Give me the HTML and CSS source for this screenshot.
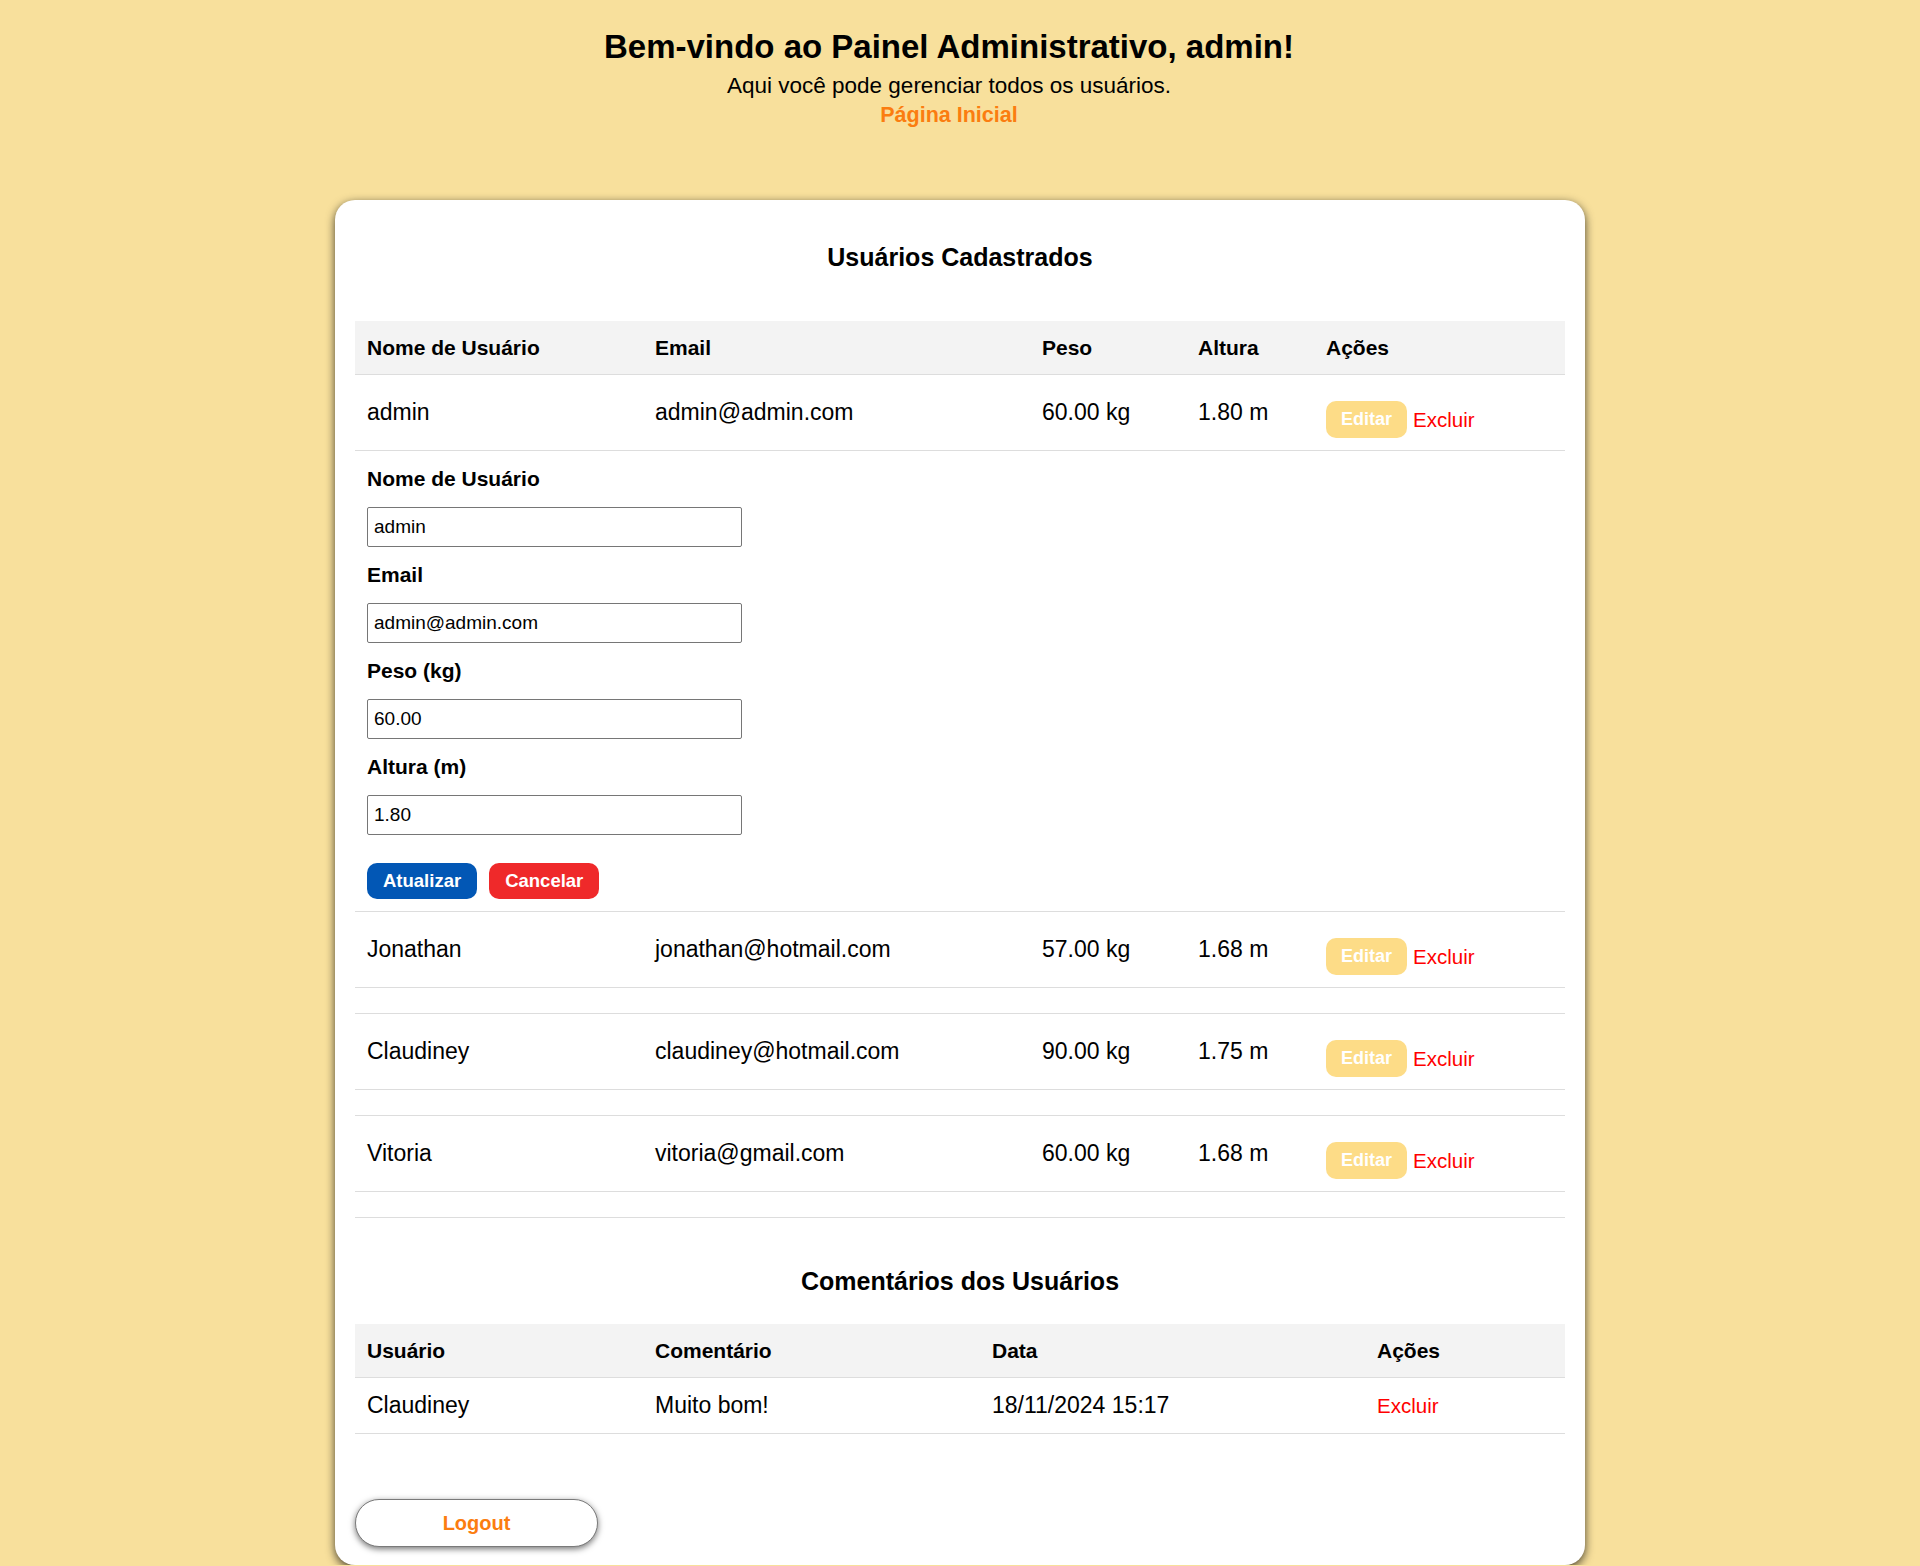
FILE: index.html
```html
<!DOCTYPE html>
<html lang="pt-BR">
<head>
<meta charset="UTF-8">
<title>Painel Administrativo</title>
<link rel="stylesheet" href="styles.css">
</head>
<body>
<header class="top">
  <h1 class="welcome">Bem-vindo ao Painel Administrativo, admin!</h1>
  <p class="intro">Aqui você pode gerenciar todos os usuários.</p>
  <a class="home-link" href="#">Página Inicial</a>
</header>
<main class="card">
  <h2 class="section-title users-title">Usuários Cadastrados</h2>
  <table class="data-table">
    <colgroup>
      <col class="c-name"><col class="c-email"><col class="c-peso"><col class="c-altura"><col class="c-acoes">
    </colgroup>
    <thead>
      <tr><th>Nome de Usuário</th><th>Email</th><th>Peso</th><th>Altura</th><th>Ações</th></tr>
    </thead>
    <tbody>
      <tr>
        <td>admin</td><td>admin@admin.com</td><td>60.00 kg</td><td>1.80 m</td>
        <td class="actions"><div class="actions-inner"><button class="btn-edit" type="button">Editar</button><a class="link-delete" href="#">Excluir</a></div></td>
      </tr>
      <tr class="edit-row">
        <td colspan="5">
          <form class="edit-form">
            <label class="field-label">Nome de Usuário</label>
            <input class="field-input" type="text" value="admin">
            <label class="field-label">Email</label>
            <input class="field-input" type="text" value="admin@admin.com">
            <label class="field-label">Peso (kg)</label>
            <input class="field-input" type="text" value="60.00">
            <label class="field-label">Altura (m)</label>
            <input class="field-input" type="text" value="1.80">
            <div class="form-buttons">
              <button class="btn btn-update" type="button">Atualizar</button>
              <button class="btn btn-cancel" type="button">Cancelar</button>
            </div>
          </form>
        </td>
      </tr>
      <tr>
        <td>Jonathan</td><td>jonathan@hotmail.com</td><td>57.00 kg</td><td>1.68 m</td>
        <td class="actions"><div class="actions-inner"><button class="btn-edit" type="button">Editar</button><a class="link-delete" href="#">Excluir</a></div></td>
      </tr>
      <tr class="spacer-row"><td colspan="5"></td></tr>
      <tr>
        <td>Claudiney</td><td>claudiney@hotmail.com</td><td>90.00 kg</td><td>1.75 m</td>
        <td class="actions"><div class="actions-inner"><button class="btn-edit" type="button">Editar</button><a class="link-delete" href="#">Excluir</a></div></td>
      </tr>
      <tr class="spacer-row"><td colspan="5"></td></tr>
      <tr>
        <td>Vitoria</td><td>vitoria@gmail.com</td><td>60.00 kg</td><td>1.68 m</td>
        <td class="actions"><div class="actions-inner"><button class="btn-edit" type="button">Editar</button><a class="link-delete" href="#">Excluir</a></div></td>
      </tr>
      <tr class="spacer-row"><td colspan="5"></td></tr>
    </tbody>
  </table>

  <h2 class="section-title comments-title">Comentários dos Usuários</h2>
  <table class="data-table comments-table">
    <colgroup>
      <col class="k-user"><col class="k-text"><col class="k-date"><col class="k-acoes">
    </colgroup>
    <thead>
      <tr><th>Usuário</th><th>Comentário</th><th>Data</th><th>Ações</th></tr>
    </thead>
    <tbody>
      <tr><td>Claudiney</td><td>Muito bom!</td><td>18/11/2024 15:17</td><td><a class="link-delete" href="#">Excluir</a></td></tr>
    </tbody>
  </table>

  <button class="logout" type="button">Logout</button>
</main>
</body>
</html>
```

FILE: styles.css
```css
* { box-sizing: border-box; }

html, body { margin: 0; }

body {
  background: #f8e09c;
  font-family: "Liberation Sans", Arial, sans-serif;
  color: #000;
  padding: 28px 0 0;
}

.top {
  text-align: center;
  padding-right: 22px;
}

.welcome {
  margin: 0 0 7px;
  font-size: 33px;
  line-height: 38px;
  font-weight: 700;
}

.intro {
  margin: 0 0 3px;
  font-size: 22.5px;
  line-height: 26px;
}

.home-link {
  display: block;
  width: max-content;
  margin: 0 auto;
  font-size: 21.5px;
  line-height: 26px;
  font-weight: 700;
  color: #fb7d10;
  text-decoration: none;
}

.card {
  width: 1250px;
  margin: 72px auto 0;
  background: #fff;
  border-radius: 20px;
  padding: 20px 20px 18px;
  box-shadow: 0 3px 10px rgba(0, 0, 0, 0.72);
}

.section-title {
  text-align: center;
  font-size: 25px;
  line-height: 30px;
  font-weight: 700;
}

.users-title { margin: 22px 0 49px; }
.comments-title { margin: 48px 0 28px; }

.data-table {
  width: 1210px;
  border-collapse: collapse;
  table-layout: fixed;
}

.c-name { width: 288px; }
.c-email { width: 387px; }
.c-peso { width: 156px; }
.c-altura { width: 128px; }
.c-acoes { width: 251px; }

.k-user { width: 288px; }
.k-text { width: 337px; }
.k-date { width: 385px; }
.k-acoes { width: 200px; }

.data-table th {
  background: #f3f3f3;
  padding: 12px;
  line-height: 29px;
  font-size: 21px;
  font-weight: 700;
  text-align: left;
  border-bottom: 1px solid #ddd;
}

.data-table td {
  padding: 12px;
  font-size: 23px;
  line-height: 31px;
  border-bottom: 1px solid #ddd;
  vertical-align: middle;
  white-space: nowrap;
}

.data-table td.actions { padding: 26px 12px 12px; }

.actions-inner {
  display: flex;
  align-items: center;
  gap: 6px;
}

.btn-edit {
  height: 37px;
  padding: 0 15px;
  border: none;
  border-radius: 10px;
  background: #fddc87;
  color: #fff;
  font-family: inherit;
  font-size: 18px;
  font-weight: 700;
}

.link-delete {
  color: #ff0000;
  text-decoration: none;
  font-size: 20.5px;
  line-height: 26px;
}

.spacer-row td { padding: 12px 12px 13px; }

.edit-form {
  display: flex;
  flex-direction: column;
  align-items: flex-start;
  gap: 12px;
}

.field-label {
  font-size: 21px;
  line-height: 32px;
  font-weight: 700;
}

.field-input {
  width: 375px;
  height: 40px;
  padding: 0 6px;
  border: 1px solid #767676;
  border-radius: 2px;
  font-family: inherit;
  font-size: 19px;
  color: #000;
  background: #fff;
}

.form-buttons {
  display: flex;
  gap: 12px;
  margin-top: 16px;
}

.btn {
  height: 36px;
  padding: 0 16px;
  border: none;
  border-radius: 10px;
  color: #fff;
  font-family: inherit;
  font-size: 18.5px;
  font-weight: 700;
}

.btn-update { background: #0257b5; }
.btn-cancel { background: #ef292a; }

.logout {
  display: block;
  margin-top: 65px;
  width: 243px;
  height: 48px;
  border: 1px solid #7a7a7a;
  border-radius: 24px;
  background: #fff;
  box-shadow: 0 2px 6px rgba(0, 0, 0, 0.55);
  color: #fb7d10;
  font-family: inherit;
  font-size: 20px;
  font-weight: 700;
}
```
